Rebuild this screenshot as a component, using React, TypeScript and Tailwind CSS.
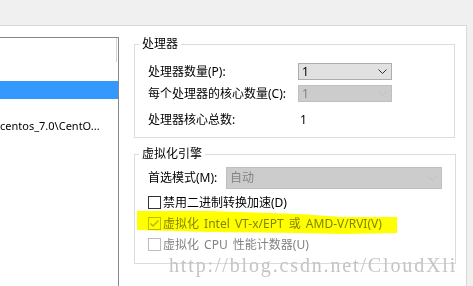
import React from "react";

const Chevron = ({ disabled = false }: { disabled?: boolean }) => (
  <svg width="9" height="5" viewBox="0 0 9 5" aria-hidden="true">
    <path
      d="M0.5 0.5 L4.5 4.5 L8.5 0.5"
      fill="none"
      stroke={disabled ? "#bfbfbf" : "#333333"}
      strokeWidth="1"
    />
  </svg>
);

const Select = ({
  value,
  width,
  height,
  disabled = false,
}: {
  value: string;
  width: string;
  height: string;
  disabled?: boolean;
}) => (
  <div
    className={`${width} ${height} flex items-center justify-between border pl-[3px] pr-[4px] ${
      disabled ? "bg-[#cccccc] border-[#bfbfbf] text-[#838383]" : "bg-[#e1e1e1] border-[#adadad] text-black"
    }`}
  >
    <span>{value}</span>
    <Chevron disabled={disabled} />
  </div>
);

const Checkbox = ({ checked = false, disabled = false }: { checked?: boolean; disabled?: boolean }) => (
  <span
    className={`w-[13px] h-[13px] shrink-0 border bg-white flex items-center justify-center ${
      disabled ? "border-[#bcbcbc]" : "border-[#333333]"
    }`}
  >
    {checked && (
      <svg width="11" height="11" viewBox="0 0 11 11" aria-hidden="true">
        <path d="M1.5 5.5 L4 8 L9.5 2.5" fill="none" stroke="#b5b5b5" strokeWidth="1.4" />
      </svg>
    )}
  </span>
);

const CheckRow = ({ label, checked, disabled }: { label: string; checked?: boolean; disabled?: boolean }) => (
  <div
    className={`flex items-center gap-[2px] h-[21px] [word-spacing:2px] ${
      disabled ? "text-[#838383]" : "text-black"
    }`}
  >
    <Checkbox checked={checked} disabled={disabled} />
    <span>{label}</span>
  </div>
);

export default function App() {
  return (
    <div className="relative w-[473px] h-[286px] overflow-hidden bg-[#f0f0f0] text-[12px] leading-[16px] text-black font-['Noto_Sans','Noto_Sans_CJK_SC',sans-serif]">
      <div className="h-[25px]" />
      <div className="flex h-[261px] w-[467px] bg-white border-t border-r border-[#d9d9d9]">
        {/* VM list */}
        <div className="w-[119px] mt-[11px] border-t border-r border-[#828790] flex flex-col">
          <div className="h-[43px] flex justify-end">
            <div className="w-[1px] h-[24px] mr-[1px] bg-[#d4d4d4]" />
          </div>
          <div className="h-[18px] bg-[#3399ff]" />
          <div className="h-[18px]" />
          <div className="h-[18px] leading-[18px] whitespace-nowrap text-[11px]">
            centos_7.0\CentO...
          </div>
        </div>

        {/* settings */}
        <div className="flex-1 pl-[15px] pt-[10px]">
          <fieldset className="w-[321px] border border-[#dcdcdc] px-[13px] pb-[9px]">
            <legend className="-ml-[9px] px-[3px] h-[16px]">处理器</legend>
            <div className="mt-[11px] h-[17px] flex items-center">
              <span className="w-[150px]">处理器数量(P):</span>
              <Select value="1" width="w-[94px]" height="h-[17px]" />
            </div>
            <div className="mt-[5px] h-[17px] flex items-center">
              <span className="w-[150px]">每个处理器的核心数量(C):</span>
              <Select value="1" width="w-[94px]" height="h-[17px]" disabled />
            </div>
            <div className="mt-[9px] h-[17px] flex items-center">
              <span className="w-[152px]">处理器核心总数:</span>
              <span>1</span>
            </div>
          </fieldset>

          <fieldset className="mt-[8px] w-[321px] border border-[#dcdcdc] px-[13px] pb-[8px]">
            <legend className="-ml-[9px] px-[3px] h-[16px]">虚拟化引擎</legend>
            <div className="mt-[5px] h-[22px] flex items-center">
              <span className="w-[78px]">首选模式(M):</span>
              <Select value="自动" width="w-[216px]" height="h-[22px]" disabled />
            </div>
            <div className="mt-[3px] flex flex-col">
              <CheckRow label="禁用二进制转换加速(D)" />
              <CheckRow label="虚拟化 Intel VT-x/EPT 或 AMD-V/RVI(V)" checked disabled />
              <CheckRow label="虚拟化 CPU 性能计数器(U)" disabled />
            </div>
          </fieldset>
        </div>
      </div>

      {/* highlighter mark */}
      <svg
        className="absolute inset-0 pointer-events-none mix-blend-multiply"
        width="473"
        height="286"
        aria-hidden="true"
      >
        <polygon
          points="137,211 210,211 300,214 342,217 397,217 397,233 342,234 300,233 210,232 137,230"
          fill="#ffff00"
        />
      </svg>

      {/* watermark */}
      <div className="absolute left-[169px] top-[255px] pointer-events-none whitespace-nowrap text-[20px] leading-[20px] tracking-[1.85px] text-[#c4c4c4] font-['Liberation_Serif',serif]">
        http://blog.csdn.net/CloudXli
      </div>
    </div>
  );
}
